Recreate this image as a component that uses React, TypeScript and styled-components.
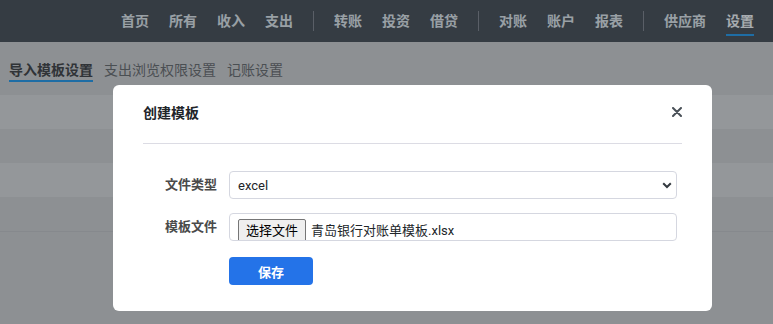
import { Fragment } from "react";
import styled, { createGlobalStyle, css } from "styled-components";

const GlobalStyle = createGlobalStyle`
    html, body {
        margin: 0;
        padding: 0;
        background: #cbcfd3;
        font-family: Roboto, "Noto Sans CJK SC", sans-serif;
    }
`

const Navbar = styled.nav`
    height: 42px;
    background: #4d5661;
    display: flex;
    justify-content: flex-end;
    align-items: center;
    padding-right: 9px;
`
const NavLink = styled.a<{ $active?: boolean }>`
    position: relative;
    height: 42px;
    display: flex;
    align-items: center;
    padding: 0 10px;
    font-size: 14px;
    font-weight: 700;
    line-height: 20px;
    color: #dce5ed;
    cursor: pointer;

    ${(p) => p.$active && css`
        color: #f0f6fc;

        &::after {
            content: "";
            position: absolute;
            left: 10px;
            right: 10px;
            top: 34px;
            height: 2px;
            background: #2b9ded;
        }
    `}
`
const NavDivider = styled.span`
    width: 1px;
    height: 20px;
    margin: 0 10px;
    background: #818994;
`

const Tabs = styled.div`
    display: flex;
    gap: 11px;
    padding: 18px 0 0 9px;
    margin-bottom: 13px;
`
const Tab = styled.a<{ $active?: boolean }>`
    font-size: 14px;
    line-height: 20px;
    padding-bottom: ${(p) => (p.$active ? "0" : "2px")};
    color: ${(p) => (p.$active ? "#454a50" : "#6b7177")};
    font-weight: ${(p) => (p.$active ? 700 : 400)};
    border-bottom: ${(p) => (p.$active ? "2px solid #2b9ded" : "none")};
`

const Table = styled.div`
    border-bottom: 1px solid #c0c5ca;
`
const Row = styled.div<{ $odd: boolean }>`
    height: 34px;
    background: ${(p) => (p.$odd ? "#d5d9dd" : "#cbcfd3")};
`

const Backdrop = styled.div`
    position: fixed;
    inset: 0;
    background: rgba(0, 0, 0, 0.3);
`
const Modal = styled.div`
    position: fixed;
    top: 85px;
    left: 113px;
    width: 599px;
    background: #fff;
    border-radius: 6px;
`
const ModalHeader = styled.div`
    margin: 0 30px;
    padding: 16px 0 18px;
    border-bottom: 1px solid #dcdce4;
    display: flex;
    justify-content: space-between;
    align-items: center;

    h5 {
        margin: 0;
        font-size: 14px;
        line-height: 24px;
        font-weight: 700;
        color: #212529;
    }
`
const CloseButton = styled.button`
    border: none;
    background: none;
    padding: 0;
    width: 10px;
    height: 10px;
    display: flex;
    cursor: pointer;
    margin-top: -2px;
`
const ModalBody = styled.div`
    padding: 27px 35px 26px 30px;
`
const FormRow = styled.div<{ $gap?: number }>`
    display: grid;
    grid-template-columns: 74px 1fr;
    column-gap: 12px;
    align-items: center;
    margin-bottom: ${(p) => p.$gap ?? 0}px;

    label {
        text-align: right;
        font-size: 13px;
        line-height: 18px;
        font-weight: 700;
        color: #4a4a4a;
    }
`
const SelectWrap = styled.div`
    position: relative;

    svg {
        position: absolute;
        right: 5px;
        top: 11px;
        pointer-events: none;
    }
`
const Select = styled.select`
    appearance: none;
    width: 100%;
    height: 28px;
    padding: 0 8px;
    border: 1px solid #d5d7e0;
    border-radius: 4px;
    background: #fff;
    font-family: Roboto, "Noto Sans CJK SC", sans-serif;
    font-size: 13px;
    color: #212529;
    outline: none;
`
const FileBox = styled.div`
    height: 28px;
    box-sizing: border-box;
    border: 1px solid #d5d7e0;
    border-radius: 4px;
    padding: 5px 8px 0;
    display: flex;
    align-items: flex-start;
    overflow: hidden;
`
const FileButton = styled.span`
    flex-shrink: 0;
    height: 25px;
    box-sizing: border-box;
    padding: 0 7px;
    border: 1px solid #767676;
    border-radius: 2px;
    background: #efefef;
    font-size: 13px;
    line-height: 22px;
    color: #000;
`
const FileName = styled.span`
    margin-left: 5px;
    font-size: 13px;
    line-height: 24px;
    color: #212529;
    white-space: nowrap;
`
const SaveButton = styled.button`
    width: 84px;
    height: 28px;
    border: none;
    border-radius: 4px;
    background: #2473e8;
    color: #fff;
    font-family: Roboto, "Noto Sans CJK SC", sans-serif;
    font-size: 13px;
    font-weight: 700;
    cursor: pointer;
`

const navGroups = [
    ["首页", "所有", "收入", "支出"],
    ["转账", "投资", "借贷"],
    ["对账", "账户", "报表"],
    ["供应商", "设置"],
]

export default function App() {
    return (
        <>
            <GlobalStyle />
            <Navbar>
                {navGroups.map((group, i) => (
                    <Fragment key={i}>
                        {i > 0 && <NavDivider />}
                        {group.map((item) => (
                            <NavLink key={item} $active={item === "设置"}>{item}</NavLink>
                        ))}
                    </Fragment>
                ))}
            </Navbar>
            <Tabs>
                <Tab $active>导入模板设置</Tab>
                <Tab>支出浏览权限设置</Tab>
                <Tab>记账设置</Tab>
            </Tabs>
            <Table>
                {[0, 1, 2, 3].map((i) => (
                    <Row key={i} $odd={i % 2 === 0} />
                ))}
            </Table>

            <Backdrop />
            <Modal>
                <ModalHeader>
                    <h5>创建模板</h5>
                    <CloseButton>
                        <svg width="10" height="10" viewBox="0 0 10 10">
                            <path d="M1 1 L9 9 M9 1 L1 9" stroke="#495057" strokeWidth="2" strokeLinecap="round" />
                        </svg>
                    </CloseButton>
                </ModalHeader>
                <ModalBody>
                    <FormRow $gap={14}>
                        <label>文件类型</label>
                        <SelectWrap>
                            <Select defaultValue="excel">
                                <option value="excel">excel</option>
                            </Select>
                            <svg width="10" height="7" viewBox="0 0 10 7">
                                <path d="M1.2 1.2 L5 5 L8.8 1.2" fill="none" stroke="#343a40" strokeWidth="2" />
                            </svg>
                        </SelectWrap>
                    </FormRow>
                    <FormRow $gap={16}>
                        <label>模板文件</label>
                        <FileBox>
                            <FileButton>选择文件</FileButton>
                            <FileName>青岛银行对账单模板.xlsx</FileName>
                        </FileBox>
                    </FormRow>
                    <FormRow>
                        <span />
                        <div>
                            <SaveButton>保存</SaveButton>
                        </div>
                    </FormRow>
                </ModalBody>
            </Modal>
        </>
    )
}
